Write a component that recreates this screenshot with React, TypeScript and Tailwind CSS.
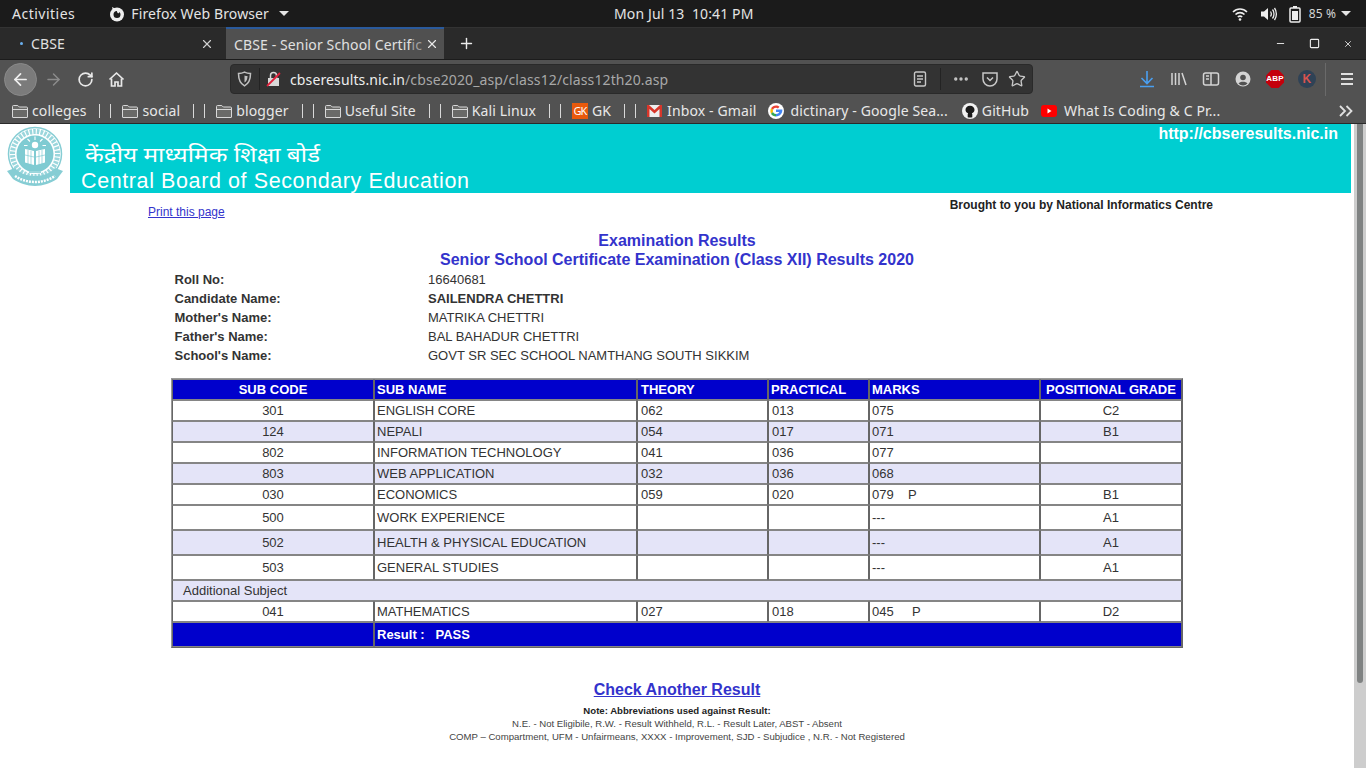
import React from "react";
import { ArrowLeft, ArrowRight, RotateCw, Plus, X, Minus, Square, Ellipsis, Star } from "lucide-react";

const uiFont = "font-['Noto_Sans',sans-serif] tracking-[0.12px]";

const Folder = () => (
  <svg width="16" height="16" viewBox="0 0 16 16" fill="none" stroke="#d8d8d8" strokeWidth="1" className="shrink-0">
    <path d="M.5 14V3.500a1 1 0 0 1 1-1h4.300l1.500 1.500h7.200a1 1 0 0 1 1 1V14a.5.5 0 0 1-.5.5H1a.5.5 0 0 1-.5-.5z" fill="#6a6a68" />
    <path d="M.5 6.500h15" />
  </svg>
);

const FirefoxIcon = () => (
  <svg width="16" height="16" viewBox="0 0 16 16">
    <circle cx="8" cy="8.500" r="7" fill="#eee" />
    <path d="M8 5a3.500 3.500 0 1 0 3.500 3.500c0-1-.5-2-1.500-2.500.3 1-.5 1.500-1 1.200C8.300 6.800 8 6 8 5z" fill="#1b1b1b" />
    <path d="M3 1l3 1.500L4 5z" fill="#eee" />
  </svg>
);

const Sep = () => (
  <div className="flex gap-[10px] ml-[13px] mr-[11px]">
    <span className="w-px h-[14px] bg-[#d8d8d8]" />
    <span className="w-px h-[14px] bg-[#d8d8d8]" />
  </div>
);

const Bookmark = ({ label }: { label: string }) => (
  <div className="flex items-center gap-1">
    <Folder />
    <span>{label}</span>
  </div>
);

const CbseLogo = () => (
  <svg width="70" height="69" viewBox="0 0 70 69" className="shrink-0">
    <circle cx="35" cy="30" r="26.500" fill="#fff" stroke="#86cdd4" strokeWidth="1.500" />
    <circle cx="35" cy="30" r="22.500" fill="none" stroke="#9ad6dc" strokeWidth="5" strokeDasharray="2.500 1.200" />
    <circle cx="35" cy="30" r="18.500" fill="#7fcbd2" />
    <circle cx="35" cy="21" r="3.200" fill="#fff" />
    <path d="M35 16v-3.500M30 17.500l-2.500-2.500M40 17.500l2.500-2.500M27.500 21.500h-3.500M42.500 21.500h3.500" stroke="#fff" strokeWidth="1.100" />
    <path d="M25 25l9 2v14l-9-2.500zM45 25l-9 2v14l9-2.500z" fill="#fff" />
    <path d="M28 26v14M31 27v14M39 27v14M42 26v14M25 31l9 2M45 31l-9 2" stroke="#7fcbd2" strokeWidth=".7" />
    <path d="M7 47l8-3c4 5 12 8 20 8s16-3 20-8l8 3-6 8c-6 4-14 7-22 7s-16-3-22-7z" fill="#86cdd4" />
    <path d="M15 52c6 4 13 6 20 6s14-2 20-6" fill="none" stroke="#fff" strokeWidth="2.500" strokeDasharray="2 1" />
    <path d="M29 47h12v2h-12z" fill="#9ad6dc" />
  </svg>
);

const rows = [
  { code: "301", name: "ENGLISH CORE", theory: "062", practical: "013", marks: "075", flag: "", grade: "C2", tall: false, shaded: false, flagAt: 36 },
  { code: "124", name: "NEPALI", theory: "054", practical: "017", marks: "071", flag: "", grade: "B1", tall: false, shaded: true, flagAt: 36 },
  { code: "802", name: "INFORMATION TECHNOLOGY", theory: "041", practical: "036", marks: "077", flag: "", grade: "", tall: false, shaded: false, flagAt: 36 },
  { code: "803", name: "WEB APPLICATION", theory: "032", practical: "036", marks: "068", flag: "", grade: "", tall: false, shaded: true, flagAt: 36 },
  { code: "030", name: "ECONOMICS", theory: "059", practical: "020", marks: "079", flag: "P", grade: "B1", tall: false, shaded: false, flagAt: 36 },
  { code: "500", name: "WORK EXPERIENCE", theory: "", practical: "", marks: "---", flag: "", grade: "A1", tall: true, shaded: false, flagAt: 36 },
  { code: "502", name: "HEALTH & PHYSICAL EDUCATION", theory: "", practical: "", marks: "---", flag: "", grade: "A1", tall: true, shaded: true, flagAt: 36 },
  { code: "503", name: "GENERAL STUDIES", theory: "", practical: "", marks: "---", flag: "", grade: "A1", tall: true, shaded: false, flagAt: 36 },
];

const info = [
  ["Roll No:", "16640681"],
  ["Candidate Name:", "SAILENDRA CHETTRI"],
  ["Mother's Name:", "MATRIKA CHETTRI"],
  ["Father's Name:", "BAL BAHADUR CHETTRI"],
  ["School's Name:", "GOVT SR SEC SCHOOL NAMTHANG SOUTH SIKKIM"],
];

const cellBorder = "border border-x-[#666666] border-y-[#858585] py-0 leading-[15px]";
const td = `${cellBorder} px-[3px]`;
const nameTd = `${cellBorder} px-[2px]`;
const th = `${cellBorder} bg-[#0000cc] text-white font-bold`;

const SubjectRow = ({ row }: { row: (typeof rows)[number] }) => (
  <tr className={`${row.shaded ? "bg-[#e4e4f8]" : "bg-white"} ${row.tall ? "h-[25px]" : "h-[21px]"}`}>
    <td className={`${td} text-center`}>{row.code}</td>
    <td className={nameTd}>{row.name}</td>
    <td className={td}>{row.theory}</td>
    <td className={td}>{row.practical}</td>
    <td className={`${cellBorder} px-[2px]`}>
      <span className="inline-block" style={{ width: row.flagAt }}>{row.marks}</span>
      {row.flag}
    </td>
    <td className={`${td} text-center`}>{row.grade}</td>
  </tr>
);

export default function App() {
  return (
    <div className="w-[1366px] h-[768px] overflow-hidden flex flex-col bg-white">
      {/* gnome top bar */}
      <div className={`${uiFont} h-[27px] shrink-0 bg-[#1b1b1b] text-[#e4e4e4] text-[14px] flex items-center relative`}>
        <span className="ml-[12px] tracking-[0.5px]">Activities</span>
        <div className="ml-[34px] flex items-center gap-[6px]">
          <FirefoxIcon />
          <span>Firefox Web Browser</span>
          <span className="ml-[4px] w-0 h-0 border-x-[5px] border-x-transparent border-t-[5px] border-t-[#e4e4e4]" />
        </div>
        <span className="absolute left-[614px]">Mon Jul 13&nbsp;&nbsp;10:41 PM</span>
        <div className="ml-auto mr-[15px] flex items-center">
          <svg width="16" height="16" viewBox="0 0 16 16" fill="none" stroke="#eee" strokeWidth="1.600">
            <path d="M1 6c4-4 10-4 14 0M3.500 8.500c2.500-2.500 6.500-2.500 9 0M5.800 11c1.200-1 3.200-1 4.400 0" />
            <circle cx="8" cy="13.500" r="1.300" fill="#eee" stroke="none" />
          </svg>
          <svg width="18" height="16" viewBox="0 0 18 16" fill="none" stroke="#eee" strokeWidth="1.300" className="ml-[12px]">
            <path d="M1 5.500h3l4-3.500v12l-4-3.500h-3z" fill="#eee" stroke="none" />
            <path d="M10.500 5.500c1 1.500 1 3.500 0 5M12.500 3.500c2 2.500 2 6.500 0 9M14.500 2c2.500 3.500 2.500 8.500 0 12" />
          </svg>
          <svg width="14" height="18" viewBox="0 0 14 18" fill="none" className="ml-[10px]">
            <rect x="2" y="3" width="10" height="14" rx="1" stroke="#eee" strokeWidth="1.500" />
            <rect x="5" y="1" width="4" height="2" fill="#eee" />
            <rect x="4" y="6" width="6" height="9" fill="#eee" />
          </svg>
          <span className="ml-[7px] text-[12px] text-[#d6d6d6]">85 %</span>
          <span className="ml-[5px] w-0 h-0 border-x-[5px] border-x-transparent border-t-[5px] border-t-[#e4e4e4]" />
        </div>
      </div>

      {/* tab strip */}
      <div className={`${uiFont} h-[33px] shrink-0 bg-[#2a2a2a] text-[14px] text-[#e0e0e0] flex items-stretch border-t border-[#333333] border-b-[#1c1c1c] border-b`}>
        <div className="w-[226px] flex items-center pl-[20px] pr-[12px]">
          <span className="w-[3px] h-[3px] rounded-full bg-[#6ab0f0] mr-[8px]" />
          <span>CBSE</span>
          <X size={14} className="ml-auto text-[#d0d0d0]" />
        </div>
        <div className="w-[218px] -mt-px bg-[#505050] border-t-2 border-[#2a5a9c] flex items-center pl-[8px] pr-[5px]">
          <span className="whitespace-nowrap">CBSE - Senior School Certif<span className="text-[#a0a0a0]">ic</span></span>
          <X size={14} className="ml-auto text-[#e8e8e8]" />
        </div>
        <div className="flex items-center ml-[14px]">
          <Plus size={17} className="text-[#ececec]" />
        </div>
        <div className="ml-auto flex items-center text-[#eee]">
          <Minus size={11} className="mr-[23px]" />
          <Square size={11} strokeWidth={2.400} className="mr-[23px]" />
          <X size={10} className="mr-[13px]" />
        </div>
      </div>

      {/* nav bar */}
      <div className={`${uiFont} h-[38px] shrink-0 bg-[#525252] flex items-center text-[#e6e6e6]`}>
        <div className="ml-[4px] w-[33px] h-[33px] rounded-full bg-[#7b7b7b] border border-[#8a8a8a] flex items-center justify-center">
          <ArrowLeft size={19} strokeWidth={2.200} className="text-[#f0f0f0]" />
        </div>
        <ArrowRight size={19} strokeWidth={1.800} className="ml-[7px] text-[#8c8c8c]" />
        <RotateCw size={17} strokeWidth={2.400} className="ml-[14px] text-[#e8e8e8]" />
        <svg width="17" height="17" viewBox="0 0 17 17" fill="none" stroke="#e8e8e8" strokeWidth="1.700" className="ml-[14px]">
          <path d="M1.500 8.500L8.500 2l7 6.500" strokeLinejoin="round" />
          <path d="M3.500 7.500V15h3.500v-4h3v4h3.500V7.500" />
        </svg>
        <div className="ml-[105px] w-[803px] h-[30px] rounded-[4px] bg-[#333333] border border-[#2a2a2a] flex items-center shrink-0">
          <svg width="15" height="16" viewBox="0 0 15 16" className="ml-[6px]" fill="none">
            <path d="M7.500 1.200c2 1 4 1.300 6 1.300 0 5.500-1.500 10-6 12.300-4.500-2.300-6-6.800-6-12.300 2 0 4-.3 6-1.300z" stroke="#c0c0c0" strokeWidth="1.500" />
            <path d="M7.500 4.500c1 .4 2 .6 3 .6 0 3-.8 5.300-3 6.500z" fill="#c0c0c0" />
          </svg>
          <span className="w-px h-[22px] bg-[#232323] ml-[7px]" />
          <svg width="16" height="16" viewBox="0 0 16 16" className="ml-[6px]">
            <rect x="2" y="7" width="11" height="8" fill="#d8d8d8" />
            <path d="M4.500 7V4.500a3 3 0 0 1 6 0V7" fill="none" stroke="#d8d8d8" strokeWidth="1.500" />
            <path d="M1 15L14 2" stroke="#e0203c" strokeWidth="1.800" />
          </svg>
          <span className="ml-[8px] text-[14px] whitespace-nowrap">
            <span className="text-[#eeeeee]">cbseresults.nic.in</span>
            <span className="text-[#a8a8a8]">/cbse2020_asp/class12/class12th20.asp</span>
          </span>
          <div className="ml-auto flex items-center text-[#c8c8c8]">
            <svg width="14" height="16" viewBox="0 0 14 16" fill="none" stroke="#c8c8c8" strokeWidth="1.400">
              <rect x="1.500" y="1" width="11" height="14" rx="1.500" />
              <path d="M4 5h6M4 8h6M4 11h4" />
            </svg>
            <span className="w-px h-[22px] bg-[#232323] ml-[13px]" />
            <Ellipsis size={18} strokeWidth={2.500} className="ml-[11px]" />
            <svg width="18" height="18" viewBox="0 0 18 18" fill="none" stroke="#c8c8c8" strokeWidth="1.500" className="ml-[11px]">
              <path d="M2 3h14v6a7 7 0 0 1-14 0z" />
              <path d="M6 7.500l3 3 3-3" />
            </svg>
            <Star size={18} strokeWidth={1.800} className="ml-[9px] mr-[6px]" />
          </div>
        </div>
        <div className="ml-auto flex items-center">
          <svg width="16" height="18" viewBox="0 0 16 18" fill="none" stroke="#4a9ff0" strokeWidth="1.600">
            <path d="M8 1v12M2.500 8l5.500 5.500L13.500 8M1 16.500h14" />
          </svg>
          <svg width="18" height="16" viewBox="0 0 18 16" fill="none" stroke="#d4d4d4" strokeWidth="1.500" className="ml-[15px]">
            <path d="M2 2v12M5.500 2v12M9 2v12M12 2l4 12" />
          </svg>
          <svg width="18" height="16" viewBox="0 0 18 16" fill="none" stroke="#d4d4d4" strokeWidth="1.500" className="ml-[14px]">
            <rect x="1.500" y="2" width="15" height="12" rx="2" />
            <path d="M9 2v12" />
            <path d="M4 5h3M4 8h3" />
          </svg>
          <svg width="16" height="16" viewBox="0 0 16 16" className="ml-[15px]">
            <circle cx="8" cy="8" r="7.500" fill="#d4d4d4" />
            <circle cx="8" cy="6.500" r="2.800" fill="#525252" />
            <path d="M3.500 12.500c1.500-2.500 7.500-2.500 9 0a6 6 0 0 1-9 0z" fill="#525252" />
          </svg>
          <div className="ml-[15px] w-[18px] h-[18px] [clip-path:polygon(30%_0,70%_0,100%_30%,100%_70%,70%_100%,30%_100%,0_70%,0_30%)] bg-[#c4000b] text-white font-['Liberation_Sans',sans-serif] font-bold text-[8px] flex items-center justify-center">
            ABP
          </div>
          <div className="ml-[14px] w-[18px] h-[18px] rounded-full bg-[#2f4256] text-[#d9534f] font-['Liberation_Sans',sans-serif] font-bold text-[12px] flex items-center justify-center">
            K
          </div>
          <span className="w-px h-[33px] bg-[#6a6a6a] ml-[9px]" />
          <div className="ml-[15px] mr-[13px] flex flex-col gap-[3px]">
            <span className="w-[12px] h-[2px] bg-[#e0e0e0]" />
            <span className="w-[12px] h-[2px] bg-[#e0e0e0]" />
            <span className="w-[12px] h-[2px] bg-[#e0e0e0]" />
          </div>
        </div>
      </div>

      {/* bookmarks */}
      <div className={`${uiFont} h-[26px] shrink-0 bg-[#525252] text-[14px] text-[#e8e8e8] flex items-center pl-[12px] whitespace-nowrap border-b border-[#2a2a2a]`}>
        <Bookmark label="colleges" />
        <Sep />
        <Bookmark label="social" />
        <Sep />
        <Bookmark label="blogger" />
        <Sep />
        <Bookmark label="Useful Site" />
        <Sep />
        <Bookmark label="Kali Linux" />
        <Sep />
        <div className="flex items-center gap-[4px]">
          <span className="w-[16px] h-[16px] bg-[#e8590c] text-white text-[11px] tracking-[-1px] leading-[16px] text-center">GK</span>
          <span>GK</span>
        </div>
        <Sep />
        <div className="flex items-center gap-[5px]">
          <svg width="15" height="13" viewBox="0 0 15 13" className="shrink-0">
            <rect x="0" y="1" width="15" height="12" fill="#eeeeee" />
            <path d="M0 1h2l5.500 5 5.500-5h2v12h-2.500V5l-5 4.500-5-4.500v8H0z" fill="#d8362a" />
          </svg>
          <span>Inbox - Gmail</span>
        </div>
        <div className="flex items-center gap-[6px] ml-[12px]">
          <svg width="16" height="16" viewBox="0 0 16 16" className="shrink-0">
            <circle cx="8" cy="8" r="8" fill="#fff" />
            <path d="M8 6.600h6.300c.4 3.700-2.200 6.900-6.300 6.900V11c1.600 0 2.900-.8 3.300-2H8z" fill="#4285f4" />
            <path d="M8 2.500c1.400 0 2.600.5 3.500 1.300l-1.600 1.600C9.400 5 8.700 4.800 8 4.800 6.600 4.800 5.400 5.700 5 7L3 5.300C4 3.600 5.900 2.500 8 2.500z" fill="#ea4335" />
            <path d="M3 5.300L5 7c-.2.600-.2 1.400 0 2l-2 1.700c-.8-1.600-.8-3.800 0-5.400z" fill="#fbbc05" />
            <path d="M5 9c.4 1.200 1.600 2 3 2v2.500c-2.100 0-4-1.100-5-2.800z" fill="#34a853" />
          </svg>
          <span>dictinary - Google Sea...</span>
        </div>
        <div className="flex items-center gap-[4px] ml-[14px]">
          <svg width="16" height="16" viewBox="0 0 16 16" className="shrink-0">
            <circle cx="8" cy="8" r="8" fill="#f2f2f2" />
            <path d="M8 2.800c-2.800 0-4.500 1.800-4.500 4 0 1.700 1 3 2.700 3.500-.3.300-.5.700-.5 1.200v2.700c1.500.5 3.100.5 4.600 0v-2.700c0-.5-.2-.9-.5-1.200 1.700-.5 2.700-1.800 2.700-3.500 0-2.200-1.700-4-4.500-4z" fill="#1b1b1b" />
          </svg>
          <span>GitHub</span>
        </div>
        <div className="flex items-center gap-[7px] ml-[12px]">
          <svg width="16" height="12" viewBox="0 0 16 12" className="shrink-0">
            <rect width="16" height="12" rx="3" fill="#f00" />
            <path d="M6.500 3.500l4 2.500-4 2.500z" fill="#fff" />
          </svg>
          <span>What Is Coding &amp; C Pr...</span>
        </div>
        <svg width="14" height="12" viewBox="0 0 14 12" fill="none" stroke="#e0e0e0" strokeWidth="1.800" className="ml-auto mr-[13px]">
          <path d="M1 1l5 5-5 5M7.500 1l5 5-5 5" />
        </svg>
      </div>

      {/* page */}
      <div className="flex-1 min-h-0 flex font-['Liberation_Sans',Arial,sans-serif] text-[13px] text-[#333333]">
        <div className="w-[1351px] shrink-0 flex flex-col">
          <div className="h-[69px] shrink-0 flex">
            <CbseLogo />
            <div className="flex-1 bg-[#00ced1] text-white relative overflow-hidden">
              <div className="pl-[15px] pt-[21px] text-[20px] leading-[24px] font-['Noto_Sans_Devanagari','Noto_Sans',sans-serif]">
                <span className="inline-block origin-left scale-x-[1.22]">केंद्रीय माध्यमिक शिक्षा बोर्ड</span>
              </div>
              <div className="pl-[11px] text-[21.500px] leading-[24px] tracking-[0.600px]">Central Board of Secondary Education</div>
              <span className="absolute right-[13px] top-[1px] font-bold text-[16px] leading-[18px]">http://cbseresults.nic.in</span>
            </div>
          </div>

          <div className="flex h-[27px] shrink-0 pl-[148px] pr-[138px] justify-between">
            <a href="#" className="mt-[12px] text-[12px] leading-[14px] text-[#3333cc] underline">Print this page</a>
            <span className="mt-[5px] text-[12px] leading-[14px] font-bold text-[#222222]">Brought to you by National Informatics Centre</span>
          </div>

          <h1 className="mt-[11px] ml-[3px] text-center text-[#3333cc] font-bold text-[16px] leading-[19px]">Examination Results</h1>
          <h2 className="ml-[3px] text-center text-[#3333cc] font-bold text-[16px] leading-[19px]">
            Senior School Certificate Examination (Class XII) Results 2020
          </h2>

          <div className="mt-[1px] ml-[174.500px] grid grid-cols-[253.500px_1fr] auto-rows-[19px] leading-[19px]">
            {info.map(([label, value], i) => (
              <React.Fragment key={label}>
                <span className="font-bold">{label}</span>
                <span className={i === 1 ? "font-bold" : ""}>{value}</span>
              </React.Fragment>
            ))}
          </div>

          <table className="mt-[13px] ml-[171px] w-[1012px] table-fixed border-separate border-spacing-0 border border-t-[#999999] border-l-[#999999] border-r-[#666666] border-b-[#666666]">
            <colgroup>
              <col className="w-[202px]" />
              <col className="w-[263px]" />
              <col className="w-[131px]" />
              <col className="w-[101px]" />
              <col className="w-[171px]" />
              <col className="w-[142px]" />
            </colgroup>
            <thead>
              <tr className="h-[21px]">
                <th className={`${th} text-center`}>SUB CODE</th>
                <th className={`${th} text-left px-[2px]`}>SUB NAME</th>
                <th className={`${th} text-left px-[3px]`}>THEORY</th>
                <th className={`${th} text-left px-[2px]`}>PRACTICAL</th>
                <th className={`${th} text-left px-[2px]`}>MARKS</th>
                <th className={`${th} text-center`}>POSITIONAL GRADE</th>
              </tr>
            </thead>
            <tbody>
              {rows.map((row) => (
                <SubjectRow key={row.code} row={row} />
              ))}
              <tr className="h-[21px] bg-[#e4e4f8]">
                <td colSpan={6} className={`${cellBorder} px-[10px]`}>Additional Subject</td>
              </tr>
              <SubjectRow
                row={{ code: "041", name: "MATHEMATICS", theory: "027", practical: "018", marks: "045", flag: "P", grade: "D2", tall: false, shaded: false, flagAt: 40 }}
              />
              <tr className="h-[25px] bg-[#0000cc] text-white font-bold">
                <td className={td}></td>
                <td colSpan={5} className={nameTd}>Result :&nbsp;&nbsp; PASS</td>
              </tr>
            </tbody>
          </table>

          <a href="#" className="mt-[32px] ml-[3px] self-center text-[16px] leading-[19px] font-bold text-[#3333cc] underline">Check Another Result</a>
          <div className="mt-[6px] ml-[3px] text-center text-[9.600px] leading-[12px] text-[#444444]">
            <div className="font-bold text-[#222222]">Note: Abbreviations used against Result:</div>
            <div className="mt-px">N.E. - Not Eligibile, R.W. - Result Withheld, R.L. - Result Later, ABST - Absent</div>
            <div className="mt-px">COMP – Compartment, UFM - Unfairmeans, XXXX - Improvement, SJD - Subjudice , N.R. - Not Registered</div>
          </div>
        </div>

        <div className="ml-[3px] w-[12px] bg-[#cdcdcd] px-[3px]">
          <div className="h-[559px] rounded-b-[3px] bg-[#7f8282]" />
        </div>
      </div>
    </div>
  );
}
